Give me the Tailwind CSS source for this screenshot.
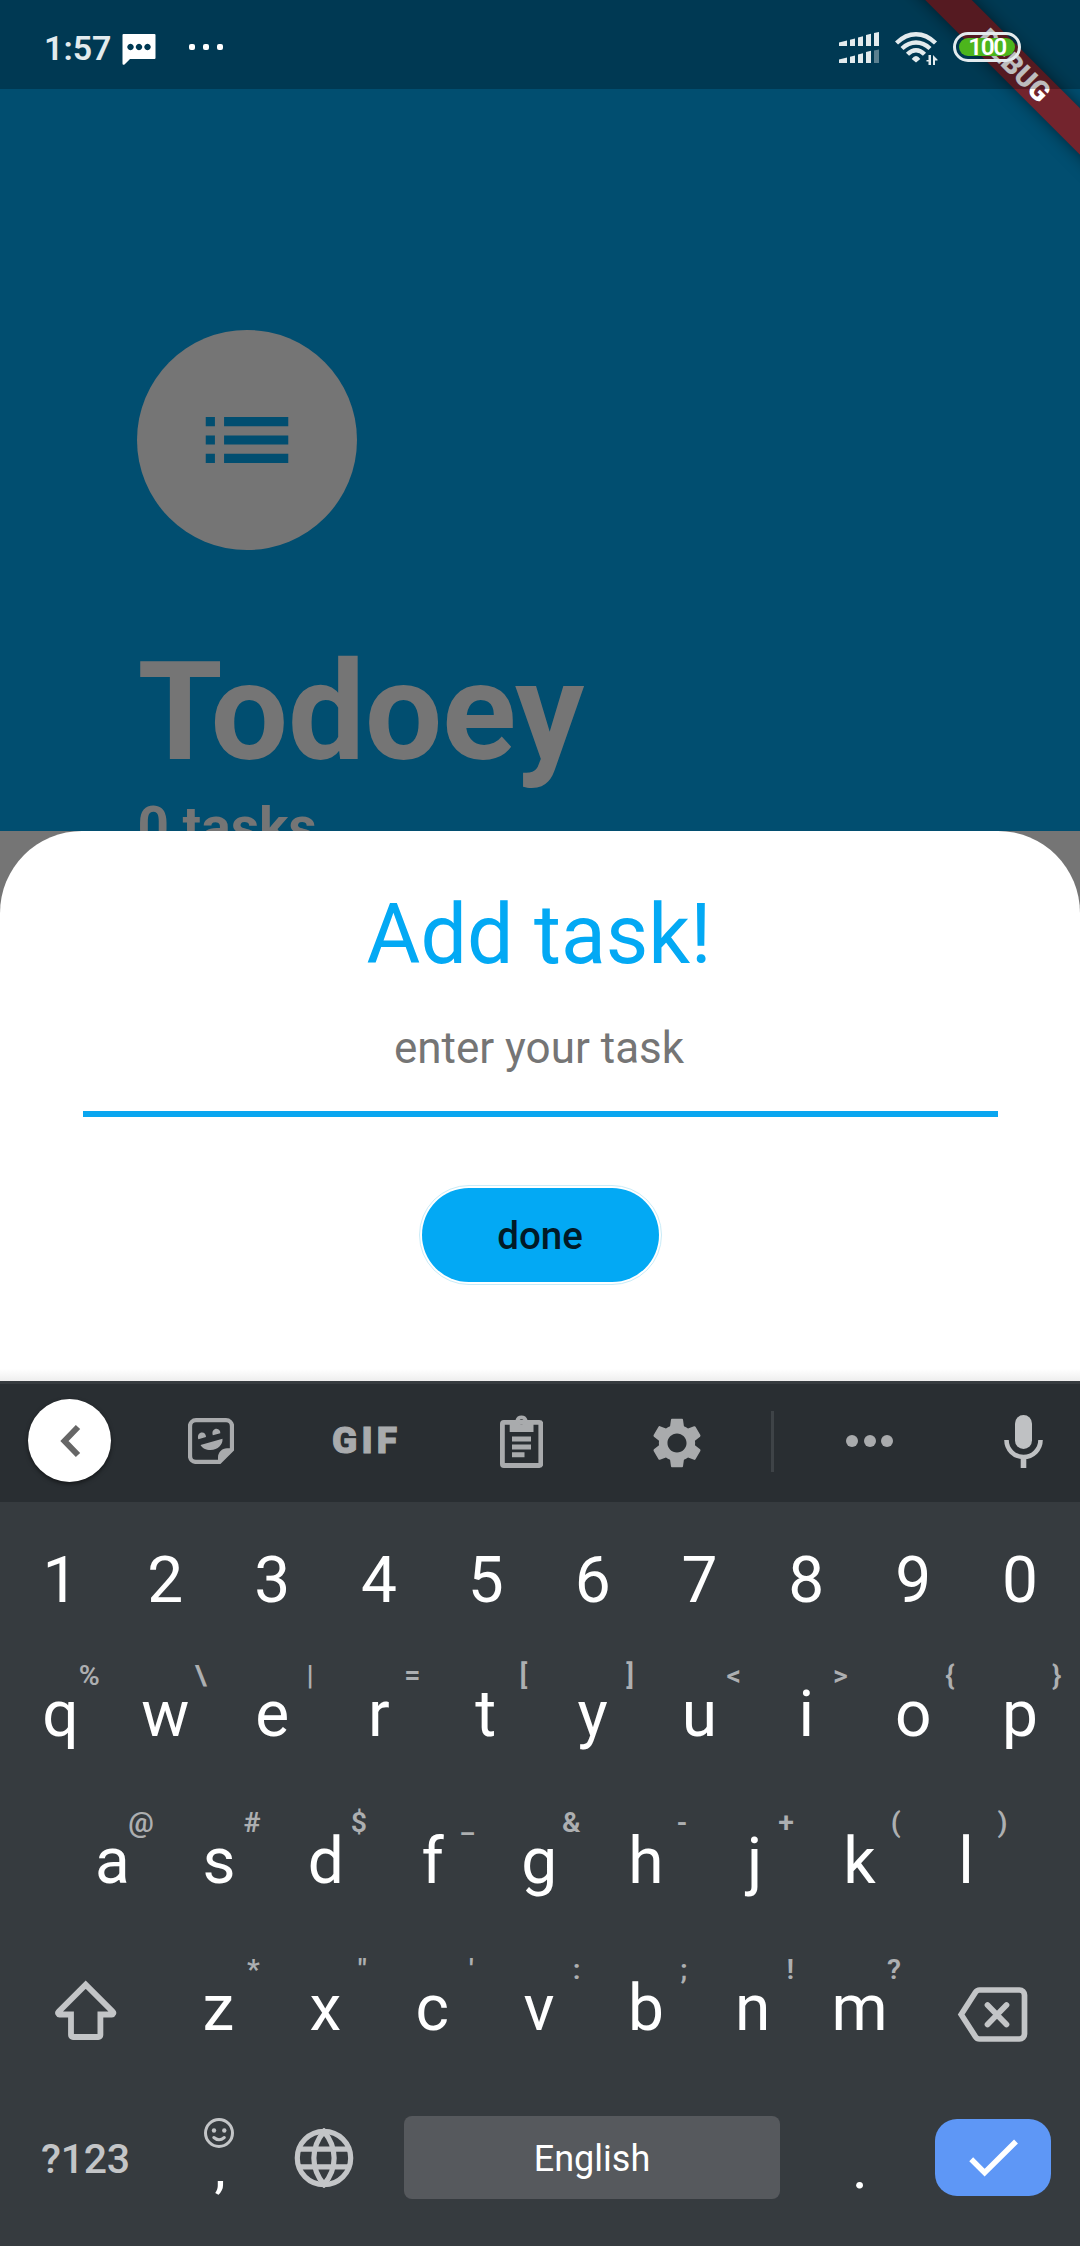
<!DOCTYPE html>
<html lang="en">
<head>
<meta charset="utf-8">
<title>Todoey</title>
<script src="https://cdn.jsdelivr.net/npm/@tailwindcss/browser@4"></script>
</head>
<body class="font-[Roboto,sans-serif]">
<div class="relative flex h-[2246px] w-[1080px] flex-col overflow-hidden bg-[#757575]">

  <!-- debug banner -->
  <div class="absolute left-[814px] top-[49px] z-10 flex h-[33px] w-[400px] rotate-45 items-center justify-center bg-[#73242d] text-[28px] font-black leading-none text-white shadow-[0_0_16px_rgba(0,0,0,0.5)]">DEBUG</div>

  <!-- status bar -->
  <header class="absolute inset-x-0 top-0 z-20 h-[89px] bg-black/26">
    <div class="flex h-full items-center">
      <span class="ml-[44px] mt-[6px] w-[78px] whitespace-nowrap text-[34px] font-semibold leading-[40px] text-[#e3ebee]">1:57</span>
      <svg class="mt-[10px] h-[31px] w-[34px]" viewBox="122 34 34 31"><path fill="#fff" fill-rule="evenodd" d="M123.500 34H154.500a1 1 0 0 1 1 1V58a1 1 0 0 1-1 1H130L124.500 64.500Q122.500 65.500 122.500 63.500V35a1 1 0 0 1 1-1zM130.500 43.800a3.200 3.200 0 1 0 .01 0zM139 43.800a3.200 3.200 0 1 0 .01 0zM147.500 43.800a3.200 3.200 0 1 0 .01 0z"/></svg>
      <div class="ml-[33px] mt-[5px] flex gap-2">
        <i class="size-[6px] rounded-[2px] bg-white"></i><i class="size-[6px] rounded-[2px] bg-white"></i><i class="size-[6px] rounded-[2px] bg-white"></i>
      </div>
      <svg class="ml-[616px] mt-[6px] h-[31px] w-[40px]" viewBox="839 32 40 31" fill="#e3ebee">
        <path d="M839 42.500L847 40.500V46H839zM850 39.700L855 38.500V46H850zM858 37.500L863 36.300V46H858zM866 35L871 33.800V46H866zM874 33L879 32V46H874z"/>
        <path d="M839 59.500L847 57.500V63H839zM850 56.700L855 55.500V63H850zM858 54.500L863 53.300V63H858zM866 52L871 50.800V63H866z"/>
        <path d="M874 50.500L879 49.500V63H874z" opacity=".4"/>
      </svg>
      <svg class="ml-[16px] mt-[8px] h-[34px] w-[44px]" viewBox="895 32 44 34" fill="none" stroke="#e3ebee" stroke-width="4.400">
        <path d="M896.500 43Q905.500 34.200 916 34.200T935.500 43M902 48.500Q908.500 42.500 916 42.500T930 48.500M907.500 54.300Q911.500 50.200 916 50.200T924.500 54.300"/>
        <path fill="#e3ebee" stroke="none" d="M911.700 59Q916 53 920.300 59L916 62.500zM931 55V65H928.500V61.500H926.500V60H928.500V55zM933 65V55L937.500 59.500V60.500H935V65z"/>
      </svg>
      <div class="ml-[14px] mt-[5px] flex h-[30px] w-[68px] rounded-full border-[3px] border-[#e3ebee] p-[3px]">
        <div class="flex flex-1 items-center justify-center rounded-full bg-[#4cb51c] text-[24.5px] font-semibold leading-none tracking-[-1.5px] text-white">100</div>
      </div>
    </div>
  </header>

  <!-- dimmed home screen -->
  <section class="flex h-[831px] flex-col items-start overflow-hidden bg-[#014e70] pl-[137.4px] pt-[330px] text-[#757575]">
    <div class="flex size-[220px] shrink-0 items-center justify-center rounded-full bg-[#757575]">
      <svg class="size-[110px]" viewBox="0 0 24 24" fill="#014e70"><path d="M3 13h2v-2H3v2zm0 4h2v-2H3v2zm0-8h2V7H3v2zm4 4h14v-2H7v2zm0 4h14v-2H7v2zM7 7v2h14V7H7z"/></svg>
    </div>
    <h1 class="mt-[82px] text-[137.5px] font-bold leading-[161px] tracking-[-0.4px]">Todoey</h1>
    <p class="mt-[2px] text-[55px] font-bold leading-[64px]">0 tasks</p>
  </section>

  <!-- bottom sheet -->
  <section class="relative flex h-[550px] shrink-0 flex-col items-center rounded-t-[82px] bg-white">
    <h2 class="-ml-[2px] mt-[55px] text-[82.5px] leading-[97px] text-[#03a9f4]">Add task!</h2>
    <div class="mt-[33px] flex h-[101px] w-[915px] justify-center border-b-[6px] border-[#0aa6f0] pr-[2px] pt-[6px] text-[44px] leading-[52px] text-[#757575]">enter your task</div>
    <button class="mt-[68px] flex h-[100px] w-[243px] items-center justify-center rounded-full border border-[#c9ecf8] p-[2px]">
      <span class="flex h-[94px] w-[237px] items-center justify-center rounded-full bg-[#03a9f4] pt-[1px] text-[38.5px] font-medium text-[#011a27]">done</span>
    </button>
    <div class="absolute inset-x-0 bottom-0 h-3 bg-linear-to-b from-white to-[#eeeeee]"></div>
  </section>

  <!-- keyboard -->
  <section class="flex flex-1 flex-col bg-[#363b3f]">
    <div class="flex h-[121px] items-center border-t-[3px] border-[#363b3f] bg-[#292e32] pb-[4px]">
      <div class="-mt-[1px] ml-[28px] flex size-[83px] items-center justify-center rounded-full bg-white shadow-[0_2px_4px_rgba(0,0,0,0.5)]">
        <svg class="h-[34px] w-[22px]" viewBox="59 1424 22 34" fill="none" stroke="#666" stroke-width="6"><path d="M78 1427L64.500 1441L78 1455"/></svg>
      </div>
      <svg class="ml-[77px] h-[46px] w-[46px]" viewBox="188 1418 46 46" fill="#a9abad">
        <path fill="none" stroke="#a9abad" stroke-width="4.300" d="M196 1420.200H226a6 6 0 0 1 6 6V1449.500L219.500 1461.900H196a6 6 0 0 1-6-6V1426.200a6 6 0 0 1 6-6z"/>
        <path d="M218 1463V1457.500c0-5 4-9.200 9-9.200H233v2L220.500 1463zM198.300 1439.200C197 1435 199.500 1432.500 202 1432.500S206 1434.500 206 1437zM212.800 1435.200C211.500 1431 214 1428.800 216.500 1428.800S220.500 1431 220.300 1433.200zM200.500 1445L222.500 1438.700C223 1444.500 218 1450 210.500 1450C206 1450 202 1448 200.500 1445z"/>
      </svg>
      <svg class="ml-[93px] h-[60px] w-[80px]" viewBox="327 1411 80 60"><text x="332" y="1453" fill="#a9abad" stroke="#a9abad" stroke-width="1" font-family="Roboto" font-weight="900" font-size="37" textLength="65" lengthAdjust="spacing">GIF</text></svg>
      <svg class="ml-[93px] h-[53px] w-[43px]" viewBox="500 1415 43 53" fill="#a9abad">
        <rect x="502.400" y="1422.300" width="38.400" height="43.200" rx="1.500" fill="none" stroke="#a9abad" stroke-width="4.800"/>
        <path fill-rule="evenodd" d="M509.700 1420H515.500a6.300 6.300 0 0 1 12 0H533.500V1432H509.700zM521.500 1419.300a2.700 2.700 0 1 0 .01 0z"/>
        <path d="M512 1436.500h19v5h-19zM512 1444.500h19v5h-19zM512 1452.300h12.500v5h-12.500z"/>
      </svg>
      <svg class="ml-[105px] mt-[3px] size-[58px]" viewBox="0 0 24 24" fill="#a9abad"><path fill-rule="evenodd" d="M19.430 12.980c.04-.32.07-.64.07-.98s-.03-.66-.07-.98l2.110-1.650c.19-.15.24-.42.12-.64l-2-3.460c-.12-.22-.39-.3-.61-.22l-2.490 1c-.52-.4-1.080-.73-1.690-.98l-.38-2.650C14.460 2.180 14.250 2 14 2h-4c-.25 0-.46.18-.49.42l-.38 2.650c-.61.25-1.170.59-1.690.98l-2.490-1c-.23-.09-.49 0-.61.22l-2 3.460c-.13.22-.07.49.12.64l2.110 1.650c-.04.32-.07.65-.07.98s.03.66.07.98l-2.110 1.650c-.19.15-.24.42-.12.64l2 3.460c.12.22.39.3.61.22l2.490-1c.52.4 1.080.73 1.690.98l.38 2.650c.03.24.24.42.49.42h4c.25 0 .46-.18.49-.42l.38-2.650c.61-.25 1.170-.59 1.690-.98l2.490 1c.23.09.49 0 .61-.22l2-3.460c.12-.22.07-.49-.12-.64l-2.110-1.650zM12 15.950c-2.180 0-3.950-1.770-3.950-3.950s1.770-3.950 3.950-3.950 3.950 1.770 3.950 3.950-1.770 3.950-3.950 3.950z"/></svg>
      <div class="ml-[65px] h-[61px] w-[3px] bg-[#3e4347]"></div>
      <div class="ml-[72px] flex gap-[5.5px]">
        <i class="size-3 rounded-full bg-[#a9abad]"></i><i class="size-3 rounded-full bg-[#a9abad]"></i><i class="size-3 rounded-full bg-[#a9abad]"></i>
      </div>
      <svg class="ml-[111px] h-[53px] w-[39px]" viewBox="1004.500 1414 39 53" fill="#bfc1c3">
        <rect x="1015.500" y="1414" width="17" height="34" rx="8.500"/>
        <path fill="none" stroke="#bfc1c3" stroke-width="4.600" d="M1007 1439a17 17 0 0 0 34 0"/>
        <path d="M1021.200 1456h5.600v11h-5.600z"/>
      </svg>
    </div>

    <div id="row0" class="flex h-[139px] pl-[5px] pr-[6.5px] pt-[18px]"></div>
    <div id="row1" class="flex h-[147px] pl-[5px] pr-[6.5px]"></div>
    <div id="row2" class="flex h-[147px] pl-[59px] pr-[60.5px]"></div>
    <div class="flex h-[147px] items-center">
      <svg class="ml-[54px] mt-[4px] h-[62px] w-[64px]" viewBox="54 1981 64 62" fill="none" stroke="#c3c5c7" stroke-width="5.800"><path d="M71 2015.500H59.500a1.500 1.500 0 0 1-1-2.600L85.700 1985.700L112.900 2012.900a1.500 1.500 0 0 1-1 2.600H100.400V2036a2 2 0 0 1-2 2H73a2 2 0 0 1-2-2z"/></svg>
      <div id="row3" class="ml-[47px] flex h-full w-[748px]"></div>
      <svg class="ml-[44px] mt-[12px] h-[58px] w-[72px]" viewBox="957 1986 72 58" fill="none" stroke="#c3c5c7" stroke-width="5.700"><path d="M961.200 2014.500L975.500 1992.300Q977 1990 979.500 1990H1019.500a5 5 0 0 1 5 5V2034a5 5 0 0 1-5 5H979.500Q977 2039 975.500 2036.700z"/><path stroke-linecap="round" d="M987.500 2005l19 19.500M1006.500 2005l-19 19.500"/></svg>
    </div>

    <div class="flex h-[151px] items-center">
      <span class="ml-[41px] mt-[2px] w-[93px] text-[41px] font-medium leading-[48px] tracking-[-0.3px] text-[#c3c5c7]">?123</span>
      <div class="ml-[60px] flex w-[50px] flex-col items-center">
        <svg class="size-[30px]" viewBox="203.700 2118 30 30" fill="none" stroke="#c3c5c7" stroke-width="3"><circle cx="218.700" cy="2133" r="13.500"/><path stroke-linecap="round" d="M213.500 2137.500Q218.700 2142 224 2137.500"/><g fill="#c3c5c7" stroke="none"><circle cx="213.700" cy="2130.500" r="2.200"/><circle cx="224" cy="2130.500" r="2.200"/></g></svg>
        <span class="h-[50px] pl-[2px] text-[50px] font-medium leading-[44px] text-white">,</span>
      </div>
      <svg class="ml-[50px] size-[60px]" viewBox="294.500 2127.500 60 60" fill="none" stroke="#c3c5c7" stroke-width="5.200"><circle cx="324.500" cy="2157.500" r="26.700"/><path d="M324.500 2131C311 2147 311 2168 324.500 2184C338 2168 338 2147 324.500 2131zM299.500 2148.700H349.500M299.500 2166.300H349.500"/></svg>
      <div class="ml-[50px] flex h-[83px] w-[376px] items-center justify-center rounded-lg bg-[#56595d] pt-[2px] text-[36px] text-white">English</div>
      <span class="ml-[55px] mt-[20px] w-[50px] text-center text-[60px] leading-[72px] text-white">.</span>
      <div class="ml-[50px] flex h-[77px] w-[116px] items-center justify-center rounded-[22px] bg-[#5e97f6]">
        <svg class="ml-[2px] h-[40px] w-[50px]" viewBox="969 2137.500 50 40" fill="none" stroke="#fff" stroke-width="5.500"><path d="M971.200 2158.800L984.600 2172.200L1016 2141"/></svg>
      </div>
    </div>
  </section>
</div>
<script>
  // Each key is [letter, long-press hint]
  const rows = {
    row0: [...'1234567890'].map(k => [k, '']),
    row1: [['q','%'],['w','\\'],['e','|'],['r','='],['t','['],['y',']'],['u','<'],['i','>'],['o','{'],['p','}']],
    row2: [['a','@'],['s','#'],['d','$'],['f','_'],['g','&'],['h','-'],['j','+'],['k','('],['l',')']],
    row3: [['z','*'],['x','"'],['c',"'"],['v',':'],['b',';'],['n','!'],['m','?']]
  };
  const nudged = ['1', 'j', 'q'];
  for (const [id, keys] of Object.entries(rows)) {
    for (const [k, hint] of keys) {
      const key = document.createElement('div');
      key.className = 'relative flex h-full flex-1 items-center justify-center text-[64px] leading-none text-white';
      const glyph = document.createElement('span');
      if (nudged.includes(k)) glyph.className = 'translate-x-[2px]';
      glyph.textContent = k;
      key.append(glyph);
      if (hint) {
        const h = document.createElement('span');
        h.className = 'absolute right-[12px] top-[19px] text-[28.5px] font-semibold leading-[32px] text-[#adafb1]';
        h.textContent = hint;
        key.append(h);
      }
      document.getElementById(id).append(key);
    }
  }
</script>
</body>
</html>
